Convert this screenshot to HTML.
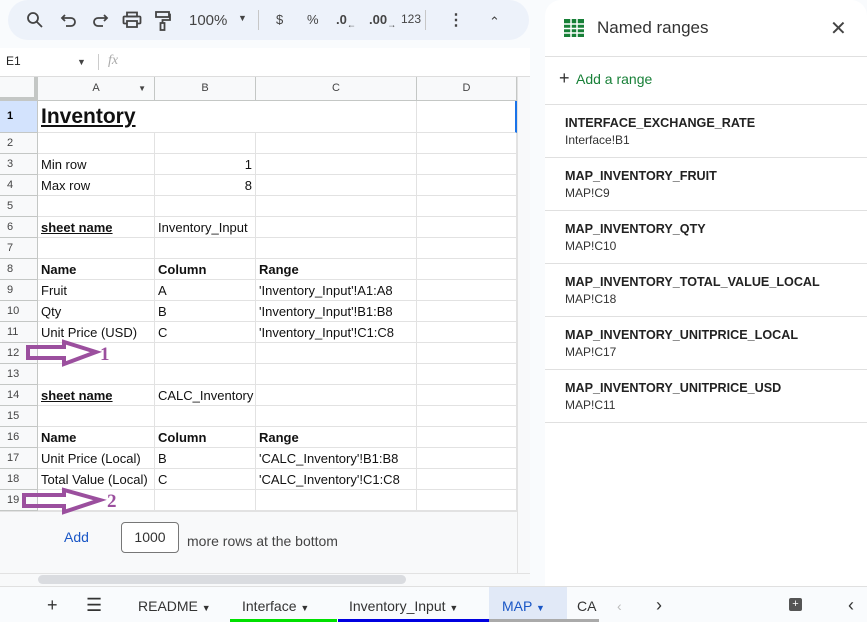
<!DOCTYPE html>
<html><head><style>
*{box-sizing:border-box;margin:0;padding:0}
body{width:867px;height:622px;overflow:hidden;background:#f9fbfd;font-family:"Liberation Sans",Arial,sans-serif;position:relative;font-size:13px;color:#000}
.abs{position:absolute}
.tb{left:8px;top:0;width:521px;height:40px;background:#edf2fa;border-radius:20px;color:#444;font-size:14px}
.tb span{position:absolute;top:12px}
.tb svg{position:absolute;top:11px}
.fb{left:0;top:48px;width:530px;height:29px;background:#fff;border-bottom:1px solid #ddd}
.grid{left:0;top:77px;width:517px;height:434px;background:#fff}
.c{position:absolute;border-right:1px solid #e2e2e2;border-bottom:1px solid #e2e2e2;font-size:13px;line-height:21px;padding-left:3px;white-space:nowrap;overflow:hidden;color:#111}
.h{background:#f8f9fa;color:#444;font-size:11px;text-align:center;padding:0;border-color:#c4c7c5}
.rh{background:#f8f9fa;color:#444;font-size:11px;padding-left:7px;border-color:#c4c7c5}
.panel{left:545px;top:0;width:322px;height:586px;background:#fff;border-radius:16px 16px 0 0}
.tabs{left:0;top:586px;width:867px;height:36px;background:#f9fbfd;border-top:1px solid #e0e0e0;font-size:14px;color:#333}
.tabs span{position:absolute;top:11px}
</style></head><body>
<div class="abs tb">
<svg style="left:18px" width="18" height="18" viewBox="0 0 18 18" fill="none" stroke="#444" stroke-width="1.8"><circle cx="7" cy="7" r="5"/><line x1="10.5" y1="10.5" x2="16" y2="16"/></svg>
<svg style="left:52px" width="18" height="18" viewBox="0 0 18 18" fill="none" stroke="#444" stroke-width="1.8"><path d="M5 4 L2 7 L5 10"/><path d="M2 7 H11 A4 4 0 0 1 11 15 H6"/></svg>
<svg style="left:83px" width="18" height="18" viewBox="0 0 18 18" fill="none" stroke="#444" stroke-width="1.8"><path d="M13 4 L16 7 L13 10"/><path d="M16 7 H7 A4 4 0 0 0 7 15 H12"/></svg>
<svg style="left:114px" width="20" height="18" viewBox="0 0 20 18" fill="none" stroke="#444" stroke-width="1.8"><rect x="5" y="1.5" width="10" height="4"/><rect x="1.5" y="5.5" width="17" height="7" rx="1"/><rect x="5" y="10" width="10" height="6" fill="#edf2fa"/></svg>
<svg style="left:147px" width="16" height="20" viewBox="0 0 16 20" fill="none" stroke="#444" stroke-width="1.8"><rect x="1" y="1" width="13" height="5"/><path d="M14 3.5 H15 V9 H7.5 V12"/><rect x="5.5" y="12" width="4" height="7"/></svg>
<span style="left:181px;font-size:15px">100%</span>
<span style="left:230px;top:13px;font-size:9px">&#9660;</span>
<div class="abs" style="left:250px;top:10px;width:1px;height:20px;background:#c7c7c7"></div>
<span style="left:268px;font-size:13px">$</span>
<span style="left:299px;font-size:13px">%</span>
<span style="left:328px;font-size:13px;font-weight:bold">.0<sub style="font-size:9px">&#8592;</sub></span>
<span style="left:361px;font-size:13px;font-weight:bold">.00<sub style="font-size:9px">&#8594;</sub></span>
<span style="left:393px;font-size:12px">123</span>
<div class="abs" style="left:417px;top:10px;width:1px;height:20px;background:#c7c7c7"></div>
<span style="left:440px;top:10px;font-size:16px;font-weight:bold">&#8942;</span>
<span style="left:481px;top:14px;font-size:13px">&#8963;</span>
</div>
<div class="abs fb">
<span class="abs" style="left:6px;top:6px;font-size:12px;color:#222">E1</span>
<span class="abs" style="left:77px;top:9px;font-size:9px;color:#444">&#9660;</span>
<div class="abs" style="left:98px;top:6px;width:1px;height:16px;background:#ccc"></div>
<span class="abs" style="left:108px;top:5px;font-size:14px;color:#aaa;font-style:italic;font-family:'Liberation Serif',serif">fx</span>
</div>
<div class="abs grid">
<div class="c h" style="left:0;top:0;width:38px;height:24px;border-right:4px solid #c4c7c5;border-bottom:4px solid #c4c7c5"></div>
<div class="c h" style="left:38px;top:0;width:117px;height:24px;line-height:23px">A<span style="position:absolute;right:8px;font-size:8px">&#9660;</span></div>
<div class="c h" style="left:155px;top:0;width:101px;height:24px;line-height:23px">B</div>
<div class="c h" style="left:256px;top:0;width:161px;height:24px;line-height:23px">C</div>
<div class="c h" style="left:417px;top:0;width:100px;height:24px;line-height:23px">D</div>
</div>
<div class="abs" style="left:0;top:101px;width:517px;height:410px">
<div class="c rh" style="left:0;top:0;width:38px;height:32px;line-height:31px;background:#d3e3fd;color:#000;font-weight:bold">1</div>
<div class="c" style="left:38px;top:0;width:218px;height:32px;line-height:32px;font-size:21px;font-weight:bold;text-decoration:underline;border-right:none">Inventory</div>
<div class="c" style="left:256px;top:0;width:161px;height:32px"></div>
<div class="c" style="left:417px;top:0;width:100px;height:32px;border-right:2px solid #1a73e8"></div>
</div>
<div class="abs" id="rows" style="left:0;top:133px;width:517px">
</div>
<div class="abs" style="left:0;top:511px;width:517px;height:62px;background:#f8f9fa;border-top:1px solid #e2e2e2"></div>
<span class="abs" style="left:64px;top:529px;color:#1a57c6;font-size:14px">Add</span>
<div class="abs" style="left:121px;top:522px;width:58px;height:31px;border:1px solid #777;border-radius:4px;background:#fff;text-align:center;line-height:29px;font-size:14px;color:#333">1000</div>
<span class="abs" style="left:187px;top:533px;color:#444;font-size:14px">more rows at the bottom</span>
<div class="abs" style="left:517px;top:77px;width:13px;height:509px;background:#f8f9fa;border-left:1px solid #e2e2e2"></div>
<div class="abs" style="left:0;top:573px;width:530px;height:13px;background:#f8f9fa;border-top:1px solid #e2e2e2"></div>
<div class="abs" style="left:38px;top:575px;width:368px;height:9px;background:#dadce0;border-radius:5px"></div>
<svg class="abs" style="left:0;top:330px" width="140" height="190">
<path d="M28 17 L64 17 L64 12 L96 22 L64 34 L64 28 L28 28 Z" fill="none" stroke="#9b4f9e" stroke-width="4"/>
<text x="100" y="30" fill="#9b4f9e" font-size="19" font-weight="bold" font-family="Liberation Serif">1</text>
<path d="M24 165 L64 165 L64 160 L100 170 L64 182 L64 176 L24 176 Z" fill="none" stroke="#9b4f9e" stroke-width="4"/>
<text x="107" y="177" fill="#9b4f9e" font-size="19" font-weight="bold" font-family="Liberation Serif">2</text>
</svg>
<div class="abs panel">
<svg class="abs" style="left:19px;top:19px" width="20" height="18"><rect width="20" height="18" fill="#188038"/><g stroke="#fff" stroke-width="1.5"><line x1="0" y1="5" x2="20" y2="5"/><line x1="0" y1="9.5" x2="20" y2="9.5"/><line x1="0" y1="14" x2="20" y2="14"/><line x1="7" y1="0" x2="7" y2="18"/><line x1="13" y1="0" x2="13" y2="18"/></g></svg>
<span class="abs" style="left:52px;top:18px;font-size:17px;color:#333">Named ranges</span>
<span class="abs" style="left:285px;top:16px;font-size:20px;color:#444">&#10005;</span>
<div class="abs" style="left:0;top:56px;width:322px;border-top:1px solid #e0e0e0"></div>
<span class="abs" style="left:14px;top:68px;font-size:18px;color:#333">+</span>
<span class="abs" style="left:31px;top:71px;font-size:14px;color:#188038">Add a range</span>
<div class="abs" style="left:0;top:104px;width:322px;border-top:1px solid #e0e0e0"></div>
<div id="nr"></div>
</div>
<div class="abs tabs">
<span style="left:47px;top:8px;font-size:18px">+</span>
<span style="left:86px;top:8px;font-size:18px">&#9776;</span>
<span style="left:138px">README <small style="font-size:9px">&#9660;</small></span>
<span style="left:242px">Interface <small style="font-size:9px">&#9660;</small></span>
<div class="abs" style="left:230px;top:32px;width:107px;height:3px;background:#00e000"></div>
<span style="left:349px">Inventory_Input <small style="font-size:9px">&#9660;</small></span>
<div class="abs" style="left:338px;top:32px;width:151px;height:3px;background:#0000e0"></div>
<div class="abs" style="left:489px;top:0;width:78px;height:35px;background:#e1e9f7"></div>
<span style="left:502px;color:#1a57c6">MAP <small style="font-size:9px">&#9660;</small></span>
<div class="abs" style="left:489px;top:32px;width:110px;height:3px;background:#aaa"></div>
<span style="left:577px">CA</span>
<span style="left:617px;color:#bbb">&#8249;</span>
<span style="left:656px;font-size:18px;top:8px">&#8250;</span>
<div class="abs" style="left:789px;top:11px;width:13px;height:13px;background:#555;border-radius:2px;color:#fff;font-size:11px;text-align:center;line-height:13px">+</div>
<span style="left:848px;font-size:18px;top:8px">&#8249;</span>
</div>
<script>
var R=[[2,'','',''],[3,'Min row','1',''],[4,'Max row','8',''],[5,'','',''],[6,'<b><u>sheet name</u></b>','Inventory_Input',''],[7,'','',''],[8,'<b>Name</b>','<b>Column</b>','<b>Range</b>'],[9,'Fruit','A',"'Inventory_Input'!A1:A8"],[10,'Qty','B',"'Inventory_Input'!B1:B8"],[11,'Unit Price (USD)','C',"'Inventory_Input'!C1:C8"],[12,'','',''],[13,'','',''],[14,'<b><u>sheet name</u></b>','CALC_Inventory',''],[15,'','',''],[16,'<b>Name</b>','<b>Column</b>','<b>Range</b>'],[17,'Unit Price (Local)','B',"'CALC_Inventory'!B1:B8"],[18,'Total Value (Local)','C',"'CALC_Inventory'!C1:C8"],[19,'','','']];
var h='';R.forEach(function(r,i){var y=i*21;
h+='<div class="c rh" style="left:0;top:'+y+'px;width:38px;height:21px">'+r[0]+'</div>';
h+='<div class="c" style="left:38px;top:'+y+'px;width:117px;height:21px">'+r[1]+'</div>';
h+='<div class="c" style="left:155px;top:'+y+'px;width:101px;height:21px;'+(r[0]==3||r[0]==4?'text-align:right;padding-right:3px':'')+'">'+r[2]+'</div>';
h+='<div class="c" style="left:256px;top:'+y+'px;width:161px;height:21px">'+r[3]+'</div>';
h+='<div class="c" style="left:417px;top:'+y+'px;width:100px;height:21px"></div>';});
document.getElementById('rows').innerHTML=h;
var N=[['INTERFACE_EXCHANGE_RATE','Interface!B1'],['MAP_INVENTORY_FRUIT','MAP!C9'],['MAP_INVENTORY_QTY','MAP!C10'],['MAP_INVENTORY_TOTAL_VALUE_LOCAL','MAP!C18'],['MAP_INVENTORY_UNITPRICE_LOCAL','MAP!C17'],['MAP_INVENTORY_UNITPRICE_USD','MAP!C11']];
var g='';N.forEach(function(n,i){var y=105+i*53;
g+='<div class="abs" style="left:20px;top:'+(y+11)+'px;font-size:12.6px;color:#222;font-weight:bold">'+n[0]+'</div>';
g+='<div class="abs" style="left:20px;top:'+(y+28)+'px;font-size:12px;color:#333">'+n[1]+'</div>';
g+='<div class="abs" style="left:0;top:'+(y+52)+'px;width:322px;border-top:1px solid #e0e0e0"></div>';});
document.getElementById('nr').innerHTML=g;
</script>
</body></html>
